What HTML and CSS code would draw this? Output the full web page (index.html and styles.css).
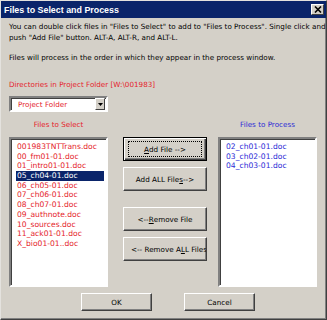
FILE: index.html
```html
<!DOCTYPE html>
<html>
<head>
<meta charset="utf-8">
<link rel="stylesheet" href="styles.css">
</head>
<body>
<div class="window">
  <div class="titlebar">
    <span class="title">Files to Select and Process</span>
    <span class="close"><svg width="8" height="7" viewBox="0 0 8 7"><path d="M1 0.5 L7 6.5 M7 0.5 L1 6.5" stroke="#000" stroke-width="1.6"/></svg></span>
  </div>
  <div class="content">
    <p class="intro">You can double click files in "Files to Select" to add to "Files to Process". Single click and<br>push "Add File" button. ALT-A, ALT-R, and ALT-L.</p>
    <p class="intro order">Files will process in the order in which they appear in the process window.</p>
    <p class="dirlabel">Directories in Project Folder [W:\001983]</p>
    <div class="combo"><span class="combo-text">Project Folder</span><span class="combo-btn"><svg width="5" height="3" viewBox="0 0 5 3"><path d="M0 0 H5 L2.5 3 Z" fill="#000"/></svg></span></div>
    <div class="lists">
      <div class="col">
        <div class="collabel red">Files to Select</div>
        <ul class="listbox red">
          <li>001983TNTTrans.doc</li>
          <li>00_fm01-01.doc</li>
          <li>01_intro01-01.doc</li>
          <li class="sel">05_ch04-01.doc</li>
          <li>06_ch05-01.doc</li>
          <li>07_ch06-01.doc</li>
          <li>08_ch07-01.doc</li>
          <li>09_authnote.doc</li>
          <li>10_sources.doc</li>
          <li>11_ack01-01.doc</li>
          <li>X_bio01-01..doc</li>
        </ul>
      </div>
      <div class="buttons">
        <div class="group">
          <button class="btn default"><span class="focus"><u>A</u>dd File --&gt;</span></button>
          <button class="btn">Add ALL File<u>s</u> --&gt;</button>
        </div>
        <div class="group">
          <button class="btn">&lt;-- <u>R</u>emove File</button>
          <button class="btn clip">&lt;-- Remove A<u>L</u>L Files</button>
        </div>
      </div>
      <div class="col">
        <div class="collabel blue">Files to Process</div>
        <ul class="listbox blue">
          <li>02_ch01-01.doc</li>
          <li>03_ch02-01.doc</li>
          <li>04_ch03-01.doc</li>
        </ul>
      </div>
    </div>
    <div class="footer">
      <button class="btn small">OK</button>
      <button class="btn small">Cancel</button>
    </div>
  </div>
</div>
</body>
</html>
```
FILE: styles.css
```css
* { box-sizing: border-box; }
html, body { margin: 0; padding: 0; }
body { width: 327px; height: 320px; overflow: hidden; font-family: "DejaVu Sans", Verdana, sans-serif; }
.window {
  width: 327px; height: 320px;
  background: #d4d0c8;
  border: 1px solid;
  border-color: #e4e2de #404040 #404040 #e4e2de;
  box-shadow: inset -1px -1px 0 #808080;
  display: flex; flex-direction: column;
}
.titlebar {
  height: 17px;
  background: #0a246a;
  display: flex; align-items: center; justify-content: space-between;
  padding: 0 2px 0 3px;
}
.title { color: #fff; font-weight: bold; font-size: 8.9px; font-family: "Liberation Sans", Arial, sans-serif; }
.close {
  width: 13px; height: 11px;
  background: #d4d0c8;
  border: 1px solid; border-color: #fff #404040 #404040 #fff;
  display: flex; align-items: center; justify-content: center;
}
.content { padding: 3px 0 0 8px; font-size: 7.2px; color: #000; flex: 1; display: flex; flex-direction: column; }
p { margin: 0; }
.intro { line-height: 11px; }
.order { margin-top: 9px; }
.dirlabel { margin-top: 16px; line-height: 11px; color: #e5232b; }
.red { color: #e5232b; }
.blue { color: #2b2bd6; }
.combo {
  margin-top: 6px;
  width: 99px; height: 16px;
  background: #fff;
  border: 2px solid; border-color: #808080 #fff #fff #808080;
  box-shadow: inset 1px 1px 0 #404040;
  display: flex; align-items: center; justify-content: space-between;
  padding: 0 1px 0 7px;
}
.combo-text { color: #e5232b; }
.combo-btn {
  width: 10px; height: 12px;
  background: #d4d0c8;
  border: 1px solid; border-color: #fff #404040 #404040 #fff;
  display: flex; align-items: center; justify-content: center;
}
.lists { display: flex; margin-top: 7px; }
.col { width: 99px; display: flex; flex-direction: column; }
.collabel { text-align: center; line-height: 11px; }
.listbox {
  margin: 7px 0 0 0; padding: 3px 2px 0 5px; list-style: none;
  height: 150px;
  background: #fff;
  border: 2px solid; border-color: #808080 #fff #fff #808080;
  box-shadow: inset 1px 1px 0 #404040;
  font-size: 7.6px;
}
.listbox li { line-height: 9.7px; height: 9.7px; padding-left: 1px; white-space: nowrap; }
.listbox li.sel { background: #0a246a; color: #fff; }
.buttons { width: 84px; margin: 0 11px 0 15px; padding-top: 18px; display: flex; flex-direction: column; gap: 16px; }
.group { display: flex; flex-direction: column; gap: 6px; }
.btn {
  font-family: "DejaVu Sans", Verdana, sans-serif;
  font-size: 7.2px; color: #000;
  background: #d4d0c8;
  height: 24px; width: 84px; padding: 0;
  border: 1px solid; border-color: #fff #404040 #404040 #fff;
  box-shadow: inset -1px -1px 0 #808080;
  white-space: nowrap; overflow: hidden;
  display: flex; align-items: center; justify-content: center;
}
.btn.default { border: 1px solid #000; box-shadow: inset 1px 1px 0 #fff, inset -1px -1px 0 #404040, inset -2px -2px 0 #808080; }
.focus { border: 1px dotted #000; width: 74px; height: 16px; display: flex; align-items: center; justify-content: center; }
.btn.clip { justify-content: flex-start; padding-left: 7px; }
.footer { display: flex; gap: 32px; margin-top: 6px; padding-left: 72px; }
.btn.small { width: 71px; height: 18px; }
u { text-decoration: underline; }
```
